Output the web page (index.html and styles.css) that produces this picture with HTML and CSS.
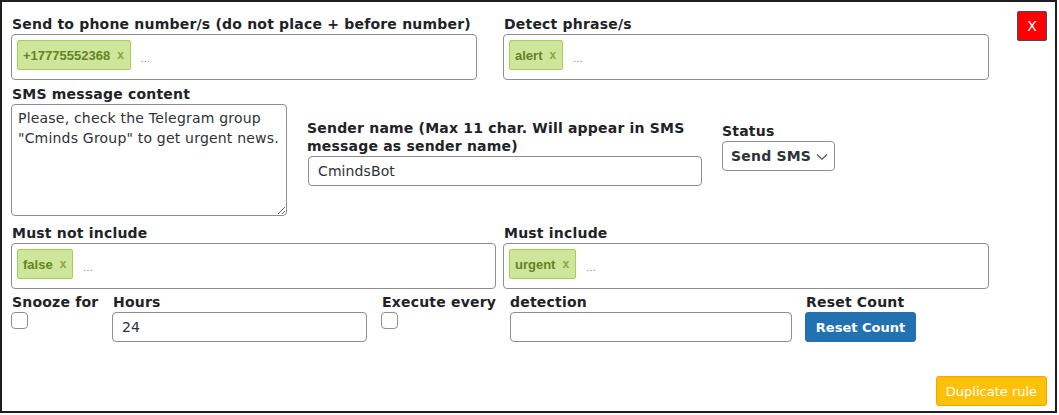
FILE: index.html
```html
<!DOCTYPE html>
<html>
<head>
<meta charset="utf-8">
<link rel="stylesheet" href="styles.css">
</head>
<body>
<div class="panel">
  <button class="close-btn">X</button>

  <div class="row row1">
    <div class="field f-phone">
      <label class="lbl">Send to phone number/s (do not place + before number)</label>
      <div class="tagbox">
        <span class="tag">+17775552368<span class="tag-x">x</span></span>
        <span class="tag-ph">...</span>
      </div>
    </div>
    <div class="field f-detect">
      <label class="lbl">Detect phrase/s</label>
      <div class="tagbox">
        <span class="tag">alert<span class="tag-x">x</span></span>
        <span class="tag-ph">...</span>
      </div>
    </div>
  </div>

  <div class="row row2">
    <div class="field f-msg">
      <label class="lbl">SMS message content</label>
      <textarea class="textarea">Please, check the Telegram group "Cminds Group" to get urgent news.</textarea>
    </div>
    <div class="field f-sender">
      <label class="lbl wrap">Sender name (Max 11 char. Will appear in SMS message as sender name)</label>
      <input class="input" type="text" value="CmindsBot">
    </div>
    <div class="field f-status">
      <label class="lbl">Status</label>
      <div class="select">
        <span>Send SMS</span>
        <svg class="chev" width="12" height="8" viewBox="0 0 12 8"><path d="M1 1.5 L6 6.2 L11 1.5" fill="none" stroke="#50575e" stroke-width="1.3"/></svg>
      </div>
    </div>
  </div>

  <div class="row row3">
    <div class="field f-notinc">
      <label class="lbl">Must not include</label>
      <div class="tagbox">
        <span class="tag">false<span class="tag-x">x</span></span>
        <span class="tag-ph">...</span>
      </div>
    </div>
    <div class="field f-inc">
      <label class="lbl">Must include</label>
      <div class="tagbox">
        <span class="tag">urgent<span class="tag-x">x</span></span>
        <span class="tag-ph">...</span>
      </div>
    </div>
  </div>

  <div class="row row4">
    <div class="field f-snooze">
      <label class="lbl">Snooze for</label>
      <input class="check" type="checkbox">
    </div>
    <div class="field f-hours">
      <label class="lbl">Hours</label>
      <input class="input" type="text" value="24">
    </div>
    <div class="field f-exec">
      <label class="lbl">Execute every</label>
      <input class="check" type="checkbox">
    </div>
    <div class="field f-detection">
      <label class="lbl">detection</label>
      <input class="input" type="text" value="">
    </div>
    <div class="field f-reset">
      <label class="lbl">Reset Count</label>
      <button class="btn-reset">Reset Count</button>
    </div>
  </div>

  <div class="row row5">
    <button class="btn-dup">Duplicate rule</button>
  </div>
</div>
</body>
</html>
```

FILE: styles.css
```css
html, body {
  margin: 0;
  padding: 0;
  background: #fff;
}
body {
  font-family: "DejaVu Sans", Verdana, sans-serif;
  color: #1d2327;
}
.panel {
  position: relative;
  width: 1057px;
  height: 413px;
  box-sizing: border-box;
  border: 2px solid #1e1e1e;
  padding: 12px 8px 0 9px;
}
.close-btn {
  position: absolute;
  top: 9px;
  right: 8px;
  width: 30px;
  height: 30px;
  background: #ff0000;
  border: 1px solid #2c4f7c;
  border-radius: 2px;
  color: #fff;
  font-family: "DejaVu Sans", sans-serif;
  font-size: 14px;
  padding: 0;
}
.row {
  display: flex;
  align-items: flex-start;
}
.field {
  display: flex;
  flex-direction: column;
}
.lbl {
  display: block;
  font-size: 14px;
  font-weight: bold;
  letter-spacing: 0.2px;
  line-height: 18px;
  margin: 1px 0 1px 1px;
  color: #1d2327;
  white-space: nowrap;
}
.lbl.wrap { white-space: normal; }
.tagbox {
  box-sizing: border-box;
  height: 46px;
  border: 1px solid #8c8f94;
  border-radius: 4px;
  padding: 5px;
  display: flex;
  align-items: flex-start;
}
.tag {
  box-sizing: border-box;
  height: 30px;
  display: inline-flex;
  align-items: center;
  background: #cde69c;
  border: 1px solid #a5d24a;
  border-radius: 2px;
  padding: 0 6px 0 5px;
  font-family: "Liberation Sans", Arial, sans-serif;
  font-weight: bold;
  font-size: 13px;
  color: #638421;
}
.tag-x {
  margin-left: 7px;
  font-size: 12px;
  color: #88a83a;
}
.tag-ph {
  margin: 13px 0 0 10px;
  font-family: "Liberation Sans", Arial, sans-serif;
  font-size: 10px;
  color: #777;
  letter-spacing: 0.5px;
}
.row1 .f-phone { width: 466px; margin-right: 26px; }
.row1 .f-detect { width: 486px; }

.row2 { margin-top: 4px; }
.f-msg { width: 276px; margin-right: 20px; }
.textarea {
  box-sizing: border-box;
  width: 276px;
  height: 112px;
  border: 1px solid #8c8f94;
  border-radius: 4px;
  padding: 3px 6px;
  font-family: "DejaVu Sans", sans-serif;
  font-size: 14px;
  letter-spacing: 0.2px;
  line-height: 20px;
  color: #2c3338;
  resize: vertical;
  margin: 0;
}
.f-sender { width: 395px; margin-right: 19px; margin-top: 34px; }
.f-sender .lbl { margin-left: 0; }
.input {
  box-sizing: border-box;
  height: 30px;
  border: 1px solid #8c8f94;
  border-radius: 4px;
  padding: 0 9px;
  font-family: "DejaVu Sans", sans-serif;
  font-size: 14px;
  letter-spacing: 0.1px;
  color: #2c3338;
  margin: 0;
}
.f-sender .input { width: 394px; margin-left: 1px; }
.f-status { margin-top: 37px; }
.select {
  box-sizing: border-box;
  width: 113px;
  height: 30px;
  margin-left: 1px;
  border: 1px solid #8c8f94;
  border-radius: 4px;
  display: flex;
  align-items: center;
  justify-content: space-between;
  padding: 0 6px 0 8px;
  font-size: 14px;
  font-weight: bold;
  letter-spacing: 0.2px;
  color: #2c3338;
}
.chev { margin-top: 2px; }

.row3 { margin-top: 7px; }
.f-notinc { width: 485px; margin-right: 7px; }
.f-inc { width: 486px; }

.row4 { margin-top: 3px; }
.f-snooze { width: 86px; margin-right: 15px; }
.f-hours { width: 255px; margin-right: 14px; }
.f-hours .input { width: 255px; }
.f-exec { width: 114px; margin-right: 14px; }
.f-detection { width: 282px; margin-right: 14px; }
.f-detection .input { width: 282px; margin-left: 1px; }
.f-reset { width: 112px; }
.check {
  appearance: none;
  -webkit-appearance: none;
  box-sizing: border-box;
  width: 17px;
  height: 17px;
  border: 1px solid #8c8f94;
  border-radius: 4px;
  background: #fff;
  margin: 0;
}
.btn-reset {
  box-sizing: border-box;
  width: 111px;
  height: 30px;
  background: #2271b1;
  border: 1px solid #2271b1;
  border-radius: 3px;
  color: #fff;
  font-family: "DejaVu Sans", sans-serif;
  font-weight: bold;
  font-size: 13px;
  padding: 0;
}
.row5 {
  justify-content: flex-end;
  margin-top: 34px;
}
.btn-dup {
  box-sizing: border-box;
  width: 111px;
  height: 30px;
  background: #ffc107;
  border: 1px solid #ffa000;
  border-radius: 3px;
  color: #fff;
  font-family: "DejaVu Sans", sans-serif;
  font-size: 13px;
  padding: 0;
}
```
